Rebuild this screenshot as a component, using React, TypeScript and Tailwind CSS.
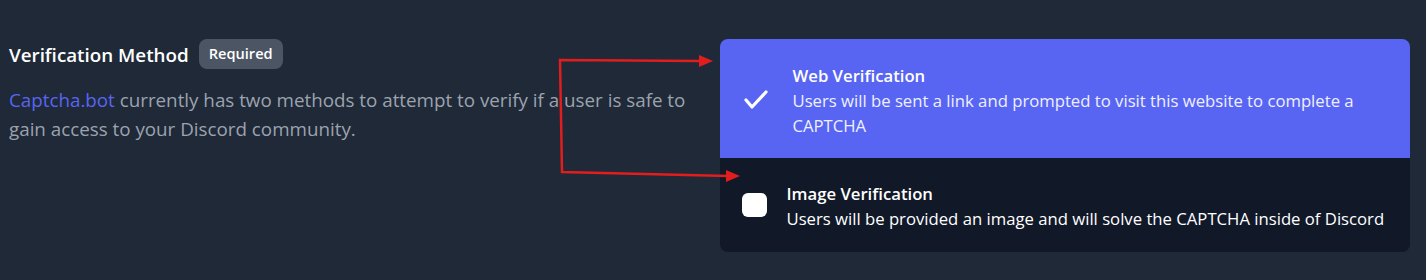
const font = { fontFamily: '"Segoe UI", "Open Sans", "Noto Sans", sans-serif' };

function Arrows() {
  return (
    <svg
      className="absolute left-0 top-0 pointer-events-none"
      width="1426"
      height="280"
      viewBox="0 0 1426 280"
    >
      <polyline
        points="701,61 560,60 562,172 728,176"
        fill="none"
        stroke="#e11d1d"
        strokeWidth="2.5"
      />
      <polygon points="713,61 699,55 699,67" fill="#e11d1d" />
      <polygon points="740,176 726,170 726,182" fill="#e11d1d" />
    </svg>
  );
}

function CheckMark() {
  return (
    <svg width="26" height="22" viewBox="0 0 26 22" className="shrink-0">
      <path
        d="M3 12 L9 19 L23 4"
        fill="none"
        stroke="white"
        strokeWidth="3.2"
        strokeLinecap="round"
        strokeLinejoin="round"
      />
    </svg>
  );
}

export default function App() {
  return (
    <div
      className="relative w-[1426px] h-[280px] bg-[#1f2937] overflow-hidden"
      style={font}
    >
      <div className="grid grid-cols-2 gap-5 pl-[9px] pr-4 pt-[39px]">
        <div>
          <div className="flex items-center gap-[10px]">
            <h2 className="pt-[2px] text-[18.8px] font-semibold text-white">Verification Method</h2>
            <span className="flex items-center h-[30px] rounded-lg bg-[#4b5563] px-[10px] text-[14.6px] font-semibold text-white">
              Required
            </span>
          </div>
          <p className="mt-[17px] text-[18.8px] leading-[29px] text-[#9ca3af]">
            <span className="text-[#5865f2]">Captcha.bot</span> currently has two methods to
            attempt to verify if a user is safe to gain access to your Discord community.
          </p>
        </div>

        <div className="overflow-hidden rounded-lg">
          <div className="flex items-center gap-[24px] bg-[#5865f2] pl-[23px] pr-6 h-[119px]">
            <CheckMark />
            <div className="text-white pt-[3px]">
              <div className="text-[16.7px] font-semibold leading-[25px]">Web Verification</div>
              <div className="text-[16.7px] leading-[25px] text-[#eef0ff]">
                Users will be sent a link and prompted to visit this website to complete a
                CAPTCHA
              </div>
            </div>
          </div>
          <div className="flex items-center gap-5 bg-[#111827] pl-[22px] pr-6 h-[94px]">
            <div className="w-[25px] h-[24px] rounded-md bg-white shrink-0" />
            <div className="text-white pt-[1px]">
              <div className="text-[16.7px] font-semibold leading-[25px]">Image Verification</div>
              <div className="text-[16.7px] leading-[25px]">
                Users will be provided an image and will solve the CAPTCHA inside of Discord
              </div>
            </div>
          </div>
        </div>
      </div>
      <Arrows />
    </div>
  );
}
